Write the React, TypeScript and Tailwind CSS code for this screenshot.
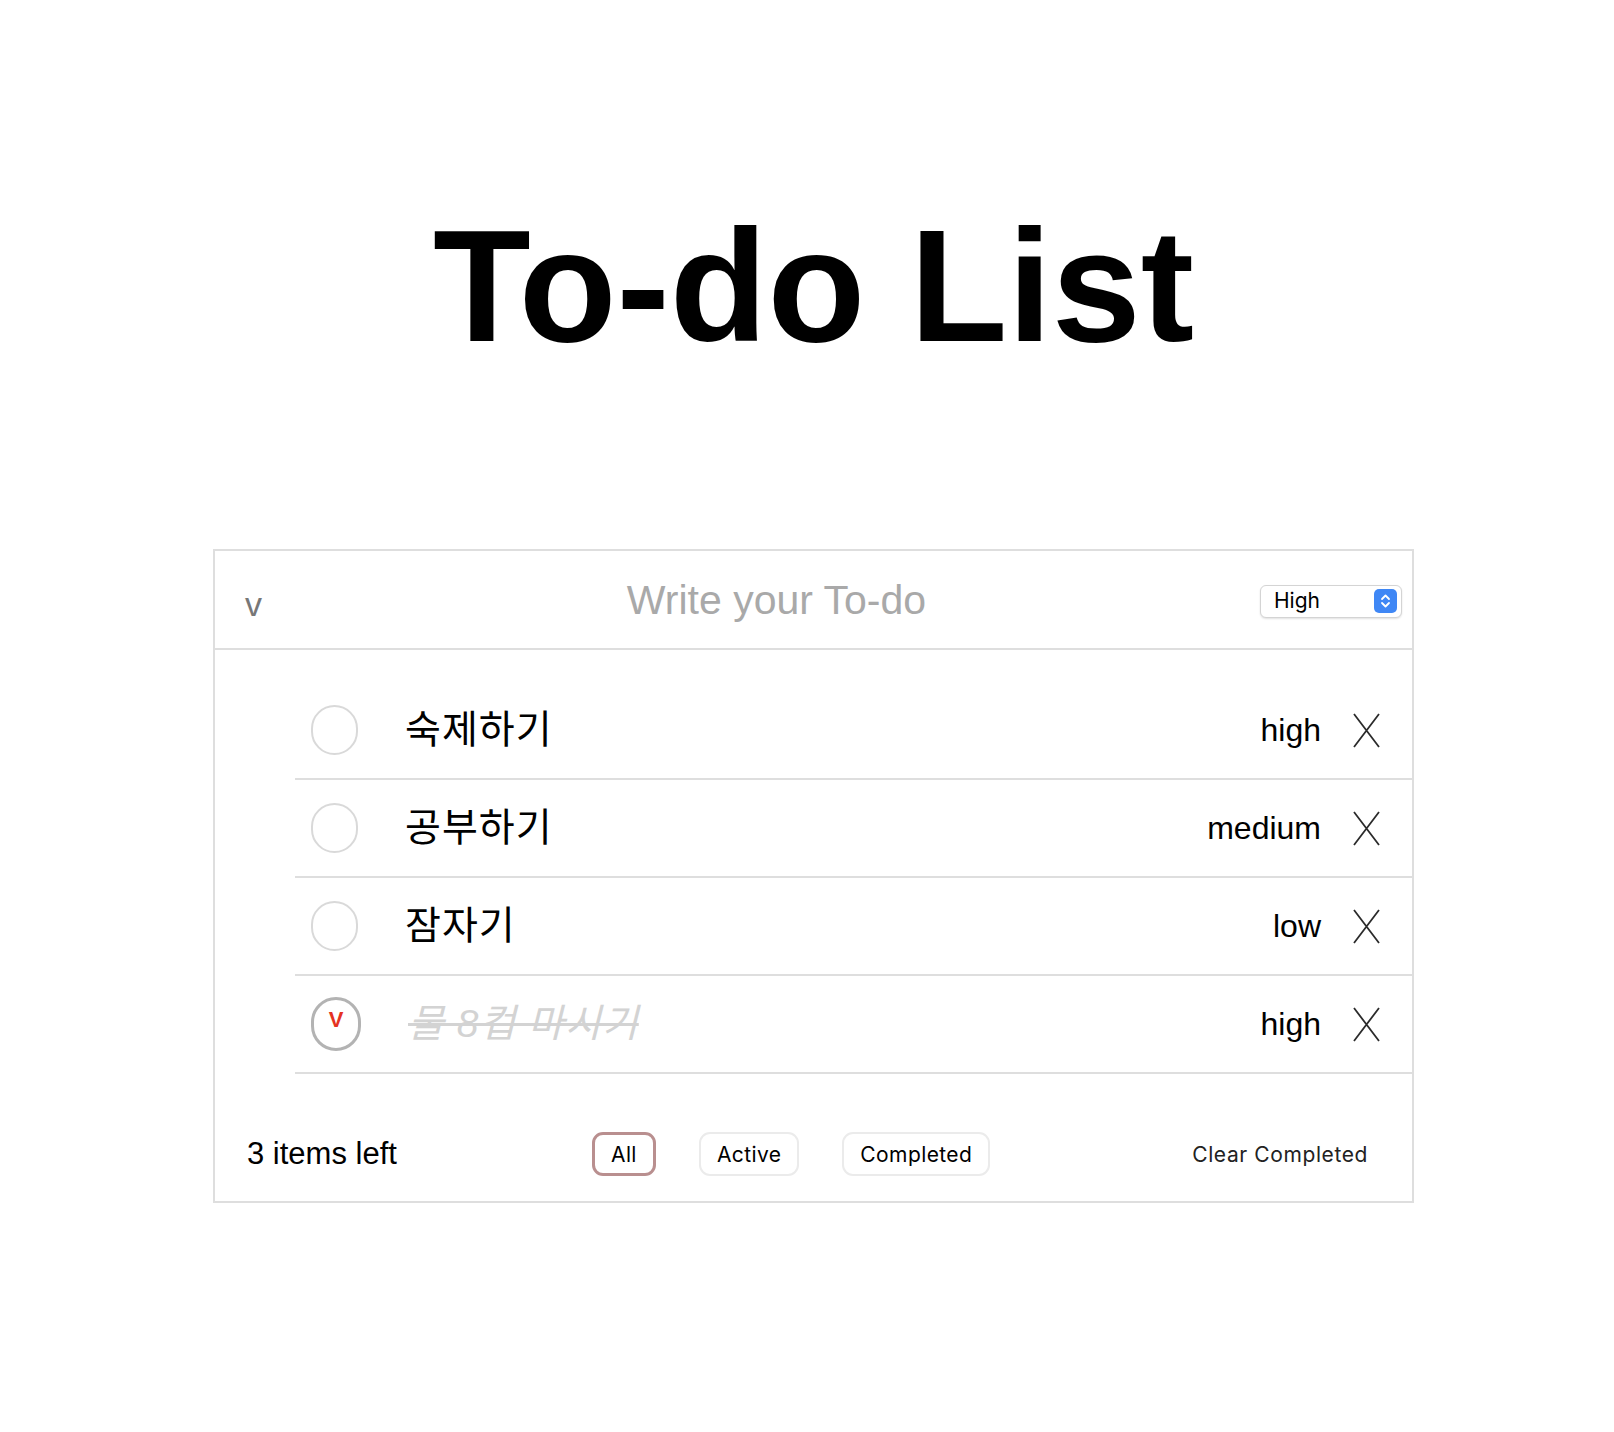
import { useState } from 'react';

interface Todo {
  id: number;
  text: string;
  priority: string;
  done: boolean;
}

const initialTodos: Todo[] = [
  { id: 1, text: '숙제하기', priority: 'high', done: false },
  { id: 2, text: '공부하기', priority: 'medium', done: false },
  { id: 3, text: '잠자기', priority: 'low', done: false },
  { id: 4, text: '물 8컵 마시기', priority: 'high', done: true },
];

function CloseIcon() {
  return (
    <svg width="27" height="35" viewBox="0 0 27 35" fill="none">
      <path d="M1 1 L26 34 M26 1 L1 34" stroke="#2b2b2b" strokeWidth="1.8" />
    </svg>
  );
}

export default function App() {
  const [todos, setTodos] = useState<Todo[]>(initialTodos);
  const [filter, setFilter] = useState('All');

  const toggle = (id: number) =>
    setTodos(todos.map((t) => (t.id === id ? { ...t, done: !t.done } : t)));
  const remove = (id: number) => setTodos(todos.filter((t) => t.id !== id));

  const left = todos.filter((t) => !t.done).length;
  const shown = todos.filter((t) =>
    filter === 'Active' ? !t.done : filter === 'Completed' ? t.done : true
  );

  return (
    <div className="min-h-[1432px] bg-white pl-[13px] text-black font-['Liberation_Sans','Noto_Sans_CJK_KR',sans-serif]">
      <h1 className="pt-[206px] text-center text-[160px] leading-[160px] font-bold">To-do List</h1>

      <div className="mx-auto mt-[183px] w-[1201px] border-2 border-[#dedede]">
        {/* header */}
        <div className="flex h-[99px] items-center border-b-2 border-[#dedede] pl-[30px] pr-[10px] pt-[3px]">
          <button className="w-[22px] text-left text-[34px] leading-none text-[#777] pt-[6px]">v</button>
          <input
            className="ml-[46px] flex-1 bg-transparent text-center text-[41px] outline-none placeholder:text-[#a9a9a9]"
            placeholder="Write your To-do"
          />
          <div className="ml-[20px] flex h-[33px] w-[142px] items-center justify-between rounded-[6px] border border-[#d4d4d4] bg-white pl-[13px] pr-[4px] shadow-[0_1px_2px_rgba(0,0,0,0.12)]">
            <span className="text-[21px] font-['Inter',sans-serif]">High</span>
            <span className="flex h-[24px] w-[23px] items-center justify-center rounded-[5px] bg-[#3f87f5]">
              <svg width="11" height="16" viewBox="0 0 11 16" fill="none">
                <path d="M2 6 L5.5 2.5 L9 6 M2 10 L5.5 13.5 L9 10" stroke="white" strokeWidth="1.8" strokeLinecap="round" strokeLinejoin="round" />
              </svg>
            </span>
          </div>
        </div>

        {/* list */}
        <ul className="ml-[80px] pt-[32px]">
          {shown.map((todo) => (
            <li key={todo.id} className="flex h-[98px] items-center border-b-2 border-[#dedede] pl-[16px] pr-[32px]">
              {todo.done ? (
                <button
                  onClick={() => toggle(todo.id)}
                  className="flex h-[54px] w-[50px] shrink-0 items-start justify-center rounded-full border-[3px] border-[#b3b3b3] pt-[9px] text-[22px] font-bold leading-none text-[#e53222]"
                >
                  V
                </button>
              ) : (
                <button
                  onClick={() => toggle(todo.id)}
                  className="h-[50px] w-[47px] shrink-0 rounded-full border-2 border-[#d9d9d9]"
                />
              )}
              <span
                className={
                  todo.done
                    ? 'ml-[47px] text-[39px] tracking-[1px] italic text-[#d3d3d3] line-through'
                    : 'ml-[47px] text-[39px] tracking-[1px]'
                }
              >
                {todo.text}
              </span>
              <span className="ml-auto text-[32px]">{todo.priority}</span>
              <button onClick={() => remove(todo.id)} className="ml-[32px] flex items-center">
                <CloseIcon />
              </button>
            </li>
          ))}
        </ul>

        {/* footer */}
        <div className="flex items-center pb-[23px] pl-[32px] pr-[44px] pt-[57px]">
          <span className="w-[345px] text-[31px]">{left} items left</span>
          <div className="flex gap-[43px] font-['Inter',sans-serif] text-[21px] tracking-[0.4px]">
            {['All', 'Active', 'Completed'].map((f) => (
              <button
                key={f}
                onClick={() => setFilter(f)}
                className={
                  filter === f
                    ? 'h-[44px] rounded-[11px] border-[3px] border-[#b98f8f] px-[16px]'
                    : 'h-[44px] rounded-[11px] border-2 border-[#ebebeb] px-[16px]'
                }
              >
                {f}
              </button>
            ))}
          </div>
          <button
            onClick={() => setTodos(todos.filter((t) => !t.done))}
            className="ml-auto font-['Inter',sans-serif] text-[21px] tracking-[0.6px] text-[#222]"
          >
            Clear Completed
          </button>
        </div>
      </div>
    </div>
  );
}
